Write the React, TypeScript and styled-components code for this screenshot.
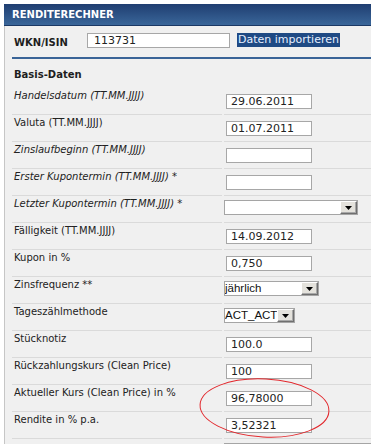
import React from "react";
import styled, { createGlobalStyle } from "styled-components";

const Global = createGlobalStyle`
  html, body { margin: 0; padding: 0; background: #ffffff; overflow: hidden; }
  body { font-family: "DejaVu Sans", Verdana, sans-serif; }
`;

const Panel = styled.div`
  margin: 4px 0 0 4px;
`;

const Header = styled.div`
  height: 21px;
  border-bottom: 1px solid #1b3864;
  background: linear-gradient(#1f3e71, #3a6699);
  color: #ffffff;
  font: bold 10px/21px "DejaVu Sans", Verdana, sans-serif;
  padding-left: 8px;
`;

const Body = styled.div`
  position: relative;
  border-left: 1px solid #c6c6c6;
  background: #f0f0f0;
  padding: 7px 0 0 7px;
  min-height: 420px;
  overflow: hidden;
`;

const WknRow = styled.div`
  display: flex;
  align-items: flex-start;
  padding-left: 2px;
`;

const WknLabel = styled.div`
  width: 73px;
  margin-top: 4px;
  font: bold 10px/12px "DejaVu Sans", Verdana, sans-serif;
  color: #1e1e1e;
`;

const TextInput = styled.input<{ $w: number; $pad?: number }>`
  box-sizing: border-box;
  width: ${(p) => p.$w}px;
  height: 15px;
  margin: 0;
  padding: 0 4px 0 ${(p) => p.$pad ?? 4}px;
  border: 1px solid #a7a7a7;
  background: #ffffff;
  color: #222222;
  font: 11px "DejaVu Sans", Verdana, sans-serif;
  outline: none;
`;

const ImportButton = styled.button`
  height: 14px;
  margin: 0 0 0 7px;
  padding: 0 1px;
  border: none;
  background: #1f4a84;
  color: #e6efff;
  font: 11px/14px "DejaVu Sans", Verdana, sans-serif;
  cursor: pointer;
`;

const Divider = styled.div`
  height: 2px;
  margin-top: 8px;
  background: #3a6497;
`;

const SectionTitle = styled.div`
  margin-top: 10px;
  padding-left: 2px;
  font: bold 10px/12px "DejaVu Sans", Verdana, sans-serif;
  color: #1e1e1e;
`;

const Table = styled.div`
  margin-top: 7px;
  display: grid;
  grid-template-columns: 210px 1fr;
  column-gap: 2px;
`;

const LabelCell = styled.div<{ $italic?: boolean }>`
  height: 24px;
  border-bottom: 1px solid #dadada;
  padding: 2px 0 0 2px;
  font: ${(p) => (p.$italic ? "italic" : "normal")} 10px/12px "DejaVu Sans", Verdana, sans-serif;
  color: #222222;
  white-space: nowrap;
`;

const ValueCell = styled.div`
  height: 22px;
  padding-top: 4px;
  border-bottom: 1px solid #dadada;
  min-width: 0;
`;

const CellInput = styled(TextInput)`
  display: block;
  margin: 2px 0 0 2px;
`;

const SelectBox = styled.div<{ $w: number }>`
  box-sizing: border-box;
  width: ${(p) => p.$w}px;
  max-width: 100%;
  height: 15px;
  display: flex;
  align-items: stretch;
  border: 1px solid #a5a5a5;
  background: #ffffff;
  overflow: hidden;
`;

const SelectText = styled.span`
  flex: 1;
  min-width: 0;
  font: 11.5px/13px "Liberation Sans", Arial, sans-serif;
  color: #111111;
  white-space: nowrap;
  overflow: hidden;
`;

const ArrowButton = styled.span`
  box-sizing: border-box;
  width: 17px;
  flex: none;
  display: flex;
  align-items: center;
  justify-content: center;
  background: #e4e2dc;
  border-top: 1px solid #ffffff;
  border-left: 1px solid #ffffff;
  border-right: 1px solid #6f6f6f;
  border-bottom: 1px solid #6f6f6f;
  box-shadow: inset -1px -1px 0 #a8a8a8;
`;

const Ellipse = styled.svg`
  position: absolute;
  left: 190px;
  top: 348px;
  pointer-events: none;
`;

type Row =
  | { label: string; italic?: boolean; kind: "input"; value: string }
  | { label: string; italic?: boolean; kind: "select"; value: string; width: number };

const rows: Row[] = [
  { label: "Handelsdatum (TT.MM.JJJJ)", italic: true, kind: "input", value: "29.06.2011" },
  { label: "Valuta (TT.MM.JJJJ)", kind: "input", value: "01.07.2011" },
  { label: "Zinslaufbeginn (TT.MM.JJJJ)", italic: true, kind: "input", value: "" },
  { label: "Erster Kupontermin (TT.MM.JJJJ) *", italic: true, kind: "input", value: "" },
  { label: "Letzter Kupontermin (TT.MM.JJJJ) *", italic: true, kind: "select", value: "", width: 134 },
  { label: "Fälligkeit (TT.MM.JJJJ)", kind: "input", value: "14.09.2012" },
  { label: "Kupon in %", kind: "input", value: "0,750" },
  { label: "Zinsfrequenz **", kind: "select", value: "jährlich", width: 95 },
  { label: "Tageszählmethode", kind: "select", value: "ACT_ACT", width: 71 },
  { label: "Stücknotiz", kind: "input", value: "100.0" },
  { label: "Rückzahlungskurs (Clean Price)", kind: "input", value: "100" },
  { label: "Aktueller Kurs (Clean Price) in %", kind: "input", value: "96,78000" },
  { label: "Rendite in % p.a.", kind: "input", value: "3,52321" },
  { label: "", kind: "select", value: "", width: 147 },
];

const Arrow = () => (
  <svg width="7" height="4" viewBox="0 0 7 4">
    <path d="M0 0H7L3.5 4Z" fill="#000" />
  </svg>
);

export default function App() {
  return (
    <>
      <Global />
      <Panel>
        <Header>RENDITERECHNER</Header>
        <Body>
          <WknRow>
            <WknLabel>WKN/ISIN</WknLabel>
            <TextInput $w={143} $pad={6} defaultValue="113731" readOnly />
            <ImportButton type="button">Daten importieren</ImportButton>
          </WknRow>
          <Divider />
          <SectionTitle>Basis-Daten</SectionTitle>
          <Table>
            {rows.map((r, i) => (
              <React.Fragment key={i}>
                <LabelCell $italic={r.italic}>{r.label}</LabelCell>
                <ValueCell>
                  {r.kind === "input" ? (
                    <CellInput $w={86} defaultValue={r.value} readOnly />
                  ) : (
                    <SelectBox $w={r.width}>
                      <SelectText>{r.value}</SelectText>
                      <ArrowButton>
                        <Arrow />
                      </ArrowButton>
                    </SelectBox>
                  )}
                </ValueCell>
              </React.Fragment>
            ))}
          </Table>
          <Ellipse width="140" height="68" viewBox="0 0 140 68">
            <ellipse
              cx="69.5"
              cy="34"
              rx="64.5"
              ry="29"
              fill="none"
              stroke="#e2262b"
              strokeWidth="1"
              transform="rotate(3 69.5 34)"
            />
          </Ellipse>
        </Body>
      </Panel>
    </>
  );
}
